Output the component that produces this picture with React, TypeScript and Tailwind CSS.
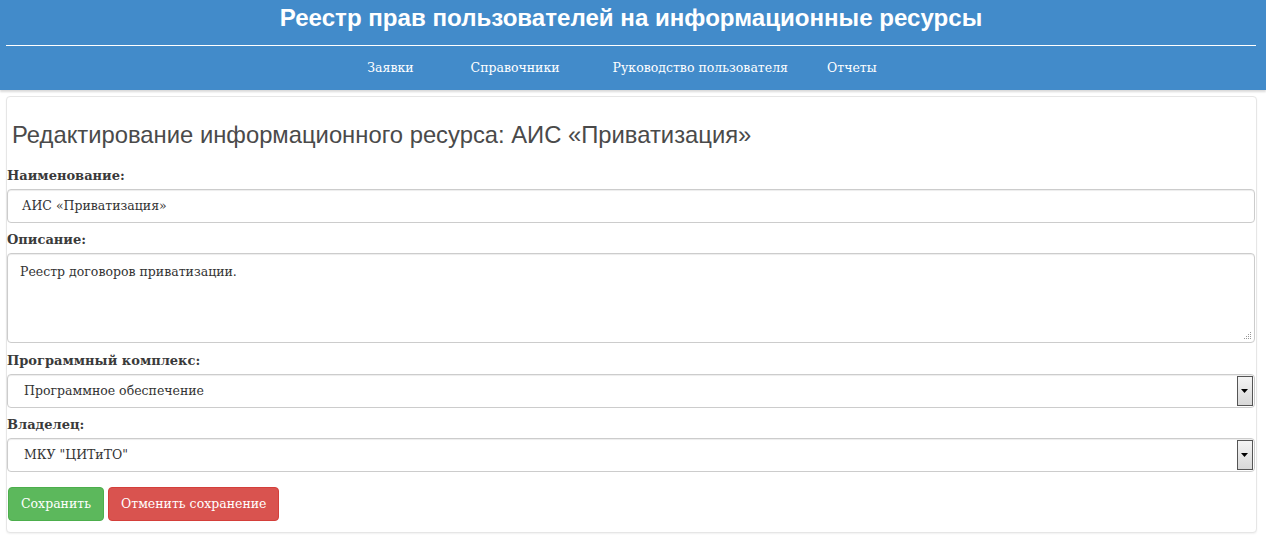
import React from "react";

const serif = { fontFamily: '"DejaVu Serif", "Liberation Serif", serif' };

function SelectBox({ value }: { value: string }) {
  return (
    <div className="relative h-[34px] w-full rounded-[4px] border border-[#cccccc] bg-white shadow-[inset_0_1px_1px_rgba(0,0,0,0.075)]">
      <div className="flex h-full items-center pl-[16px] text-[12.5px] text-[#333]" style={serif}>
        {value}
      </div>
      <div className="absolute right-[1px] top-[1px] flex h-[30px] w-[16px] items-center justify-center border border-[#555] bg-[linear-gradient(#f4f4f4,#d8d8d8)]">
        <svg width="8" height="5" viewBox="0 0 8 5">
          <path d="M0 0 H7 L3.5 4 Z" fill="#000" />
        </svg>
      </div>
    </div>
  );
}

function Label({ children }: { children: React.ReactNode }) {
  return (
    <div className="h-[24px] pt-[3px] text-[13px] font-bold leading-[16px] text-[#3a3a3a]" style={serif}>
      {children}
    </div>
  );
}

export default function App() {
  return (
    <div className="min-h-[538px] bg-white" style={{ fontFamily: '"Liberation Sans", Arial, sans-serif' }}>
      <header className="h-[90px] bg-[#428bca] shadow-[0_2px_2px_rgba(0,0,0,0.15)]">
        <div className="flex h-[45px] items-center justify-center pb-[8px] pr-[4px] text-[24.1px] font-bold text-white">
          Реестр прав пользователей на информационные ресурсы
        </div>
        <div className="ml-[6px] mr-[10px] h-[1px] bg-white" />
        <nav className="flex h-[44px] items-center justify-center pr-[22px] text-[12.5px] text-white" style={serif}>
          <span>Заявки</span>
          <span className="ml-[57px]">Справочники</span>
          <span className="ml-[53px]">Руководство пользователя</span>
          <span className="ml-[39px]">Отчеты</span>
        </nav>
      </header>

      <main className="ml-[6px] mr-[9px] mt-[6px] rounded-[4px] border border-[#e6e6e6] bg-white pb-[11px] pr-[1px] shadow-[0_1px_2px_rgba(0,0,0,0.06)]">
        <h1 className="pb-[15px] pl-[5px] pt-[23px] text-[23.8px] leading-[30px] text-[#4a4a4a]">
          Редактирование информационного ресурса: АИС «Приватизация»
        </h1>

        <Label>Наименование:</Label>
        <div className="flex h-[34px] w-full items-center rounded-[4px] border border-[#cccccc] pl-[14px] text-[12.5px] text-[#333] shadow-[inset_0_1px_1px_rgba(0,0,0,0.075)]" style={serif}>
          АИС «Приватизация»
        </div>

        <div className="mt-[6px]">
          <Label>Описание:</Label>
        </div>
        <div className="relative h-[90px] w-full rounded-[4px] border border-[#cccccc] pl-[12px] pt-[9px] text-[12.5px] text-[#333] shadow-[inset_0_1px_1px_rgba(0,0,0,0.075)]" style={serif}>
          Реестр договоров приватизации.
          <svg className="absolute bottom-[2px] right-[2px]" width="8" height="8" viewBox="0 0 8 8">
            <rect x="6" y="0" width="1" height="1" fill="#999" />
            <rect x="4" y="2" width="1" height="1" fill="#999" />
            <rect x="6" y="2" width="1" height="1" fill="#999" />
            <rect x="2" y="4" width="1" height="1" fill="#999" />
            <rect x="4" y="4" width="1" height="1" fill="#999" />
            <rect x="6" y="4" width="1" height="1" fill="#999" />
            <rect x="0" y="6" width="1" height="1" fill="#999" />
            <rect x="2" y="6" width="1" height="1" fill="#999" />
            <rect x="4" y="6" width="1" height="1" fill="#999" />
            <rect x="6" y="6" width="1" height="1" fill="#999" />
          </svg>
        </div>

        <div className="mt-[7px]">
          <Label>Программный комплекс:</Label>
        </div>
        <SelectBox value="Программное обеспечение" />

        <div className="mt-[6px]">
          <Label>Владелец:</Label>
        </div>
        <SelectBox value='МКУ "ЦИТиТО"' />

        <div className="mt-[15px] flex gap-[4px] pl-[1px]" style={serif}>
          <button className="h-[34px] rounded-[4px] border border-[#4cae4c] bg-[#5cb85c] px-[12px] text-[12.5px] text-white">
            Сохранить
          </button>
          <button className="h-[34px] rounded-[4px] border border-[#d43f3a] bg-[#d9534f] px-[12px] text-[12.5px] text-white">
            Отменить сохранение
          </button>
        </div>
      </main>
    </div>
  );
}
